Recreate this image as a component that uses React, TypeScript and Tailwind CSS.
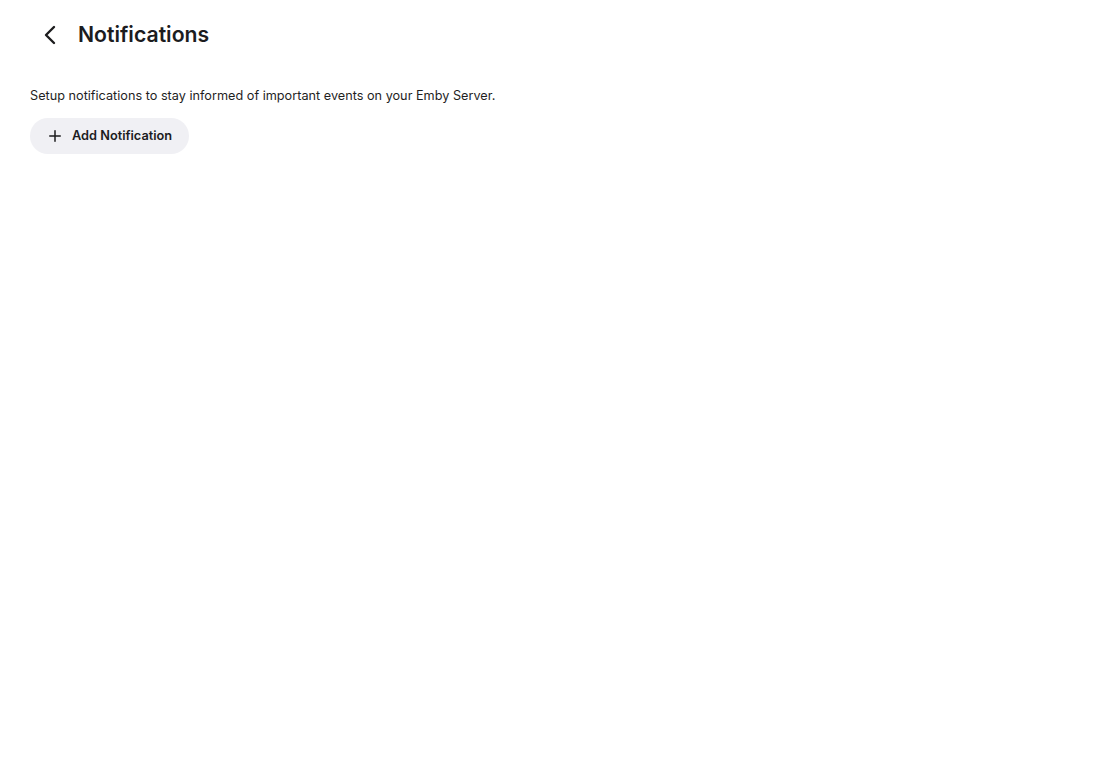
import { ChevronLeft, Plus } from "lucide-react";

const App = () => {
  return (
    <div className="min-h-screen bg-white text-[#1c1c1e] font-['Inter',sans-serif]">
      <div className="flex items-center h-[70px] pl-[28px]">
        <button className="w-[44px] h-[44px] flex items-center justify-center rounded-full">
          <ChevronLeft className="w-[32px] h-[32px]" strokeWidth={1.8} />
        </button>
        <h2 className="ml-[6px] text-[21.2px] font-semibold">Notifications</h2>
      </div>
      <div className="px-[30px] pt-[17px]">
        <p className="text-[12.7px] leading-[18px] text-[#1f1f1f]">
          Setup notifications to stay informed of important events on your Emby Server.
        </p>
        <button className="mt-[13px] flex items-center h-[36px] pl-[16px] pr-[17px] rounded-full bg-[#f0f0f4] text-[12.75px] font-semibold">
          <Plus className="w-[18px] h-[18px]" strokeWidth={2} />
          <span className="ml-[8px]">Add Notification</span>
        </button>
      </div>
    </div>
  );
};

export default App;
